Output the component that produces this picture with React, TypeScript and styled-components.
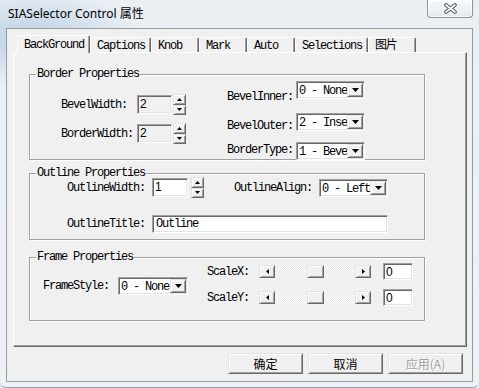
import { Fragment } from 'react';
import styled, { createGlobalStyle, css } from 'styled-components';

const mono = `"Liberation Mono", "Noto Sans CJK SC", monospace`;
const cjk = `"Noto Sans CJK SC", "Noto Sans", sans-serif`;

const GlobalStyle = createGlobalStyle`
  * { box-sizing: border-box; }
  html, body { margin: 0; padding: 0; }
  body { width: 479px; height: 388px; overflow: hidden; background: #eef2f6; }
`;

const raised = css`
  background: #f0f0f0;
  border: 1px solid;
  border-color: #e3e3e3 #696969 #696969 #e3e3e3;
  box-shadow: inset 1px 1px 0 #fff, inset -1px -1px 0 #a0a0a0;
`;

const sunken = css`
  border: 1px solid;
  border-color: #a0a0a0 #fff #fff #a0a0a0;
  box-shadow: inset 1px 1px 0 #696969, inset -1px -1px 0 #e3e3e3;
`;

const Window = styled.div`
  width: 479px;
  height: 388px;
  display: flex;
  flex-direction: column;
  background:
    radial-gradient(ellipse 110px 50px at 30px 38px, rgba(184, 204, 226, 0.9), rgba(184, 204, 226, 0)),
    linear-gradient(#eaeff4, #eef2f6);
  border-bottom: 1px solid #9aa3ad;
  border-radius: 0 0 6px 6px;
`;

const TitleBar = styled.div`
  height: 28px;
  display: flex;
  align-items: flex-start;
`;

const Title = styled.div`
  padding: 6px 0 0 8px;
  font-family: "Noto Sans", ${cjk};
  font-size: 12px;
  line-height: 16px;
  color: #000;
`;

const CloseButton = styled.div`
  margin-left: auto;
  margin-right: 6px;
  width: 46px;
  height: 18px;
  display: flex;
  align-items: center;
  justify-content: center;
  border: 1px solid #8c939b;
  border-top: none;
  border-radius: 0 0 4px 4px;
  background: linear-gradient(#f7f9fb, #e4e8ed);
  box-shadow: inset 0 0 0 1px rgba(255, 255, 255, 0.8);
`;

const Client = styled.div`
  margin: 0 6px;
  height: 354px;
  display: flex;
  flex-direction: column;
  padding: 6px 5px 0 6px;
  background: #f0f0f0;
  border: 1px solid #979ca2;
`;

const TabStrip = styled.div`
  position: relative;
  z-index: 1;
  height: 18px;
  display: flex;
  align-items: flex-end;
  padding-left: 4px;
`;

const Tab = styled.div<{ $active?: boolean }>`
  min-width: 48px;
  height: ${p => (p.$active ? 18 : 15)}px;
  margin-bottom: ${p => (p.$active ? 0 : 1)}px;
  padding: ${p => (p.$active ? '0' : '2px')} 5px 0 6px;
  display: flex;
  align-items: center;
  background: #f0f0f0;
  border-top: 1px solid #fff;
  border-left: 1px solid #fff;
  border-right: 1px solid #696969;
  border-radius: 2px 2px 0 0;
  box-shadow: inset -1px 0 0 #a0a0a0;
  font-family: ${mono};
  font-size: 12px;
  letter-spacing: -1.2px;
  line-height: 12px;
  color: #000;
  white-space: nowrap;
`;

const Panel = styled.div`
  margin-top: -1px;
  height: 295px;
  display: flex;
  flex-direction: column;
  padding-left: 15px;
  border: 1px solid;
  border-color: #fff #696969 #696969 #fff;
  box-shadow: inset -1px -1px 0 #a0a0a0;
`;

const Group = styled.div<{ $top: number; $height: number }>`
  position: relative;
  width: 396px;
  height: ${p => p.$height}px;
  margin-top: ${p => p.$top}px;
  border: 1px solid #a0a0a0;
  box-shadow: inset 1px 1px 0 #fff, 1px 1px 0 #fff;
`;

const Caption = styled.span`
  position: absolute;
  top: -7px;
  left: 6px;
  padding: 0 1px;
  background: #f0f0f0;
  font-family: ${mono};
  font-size: 12px;
  letter-spacing: -1.2px;
  line-height: 12px;
  color: #000;
  white-space: nowrap;
`;

const Label = styled.span<{ $w: number; $pad?: number }>`
  flex: none;
  width: ${p => p.$w}px;
  padding-top: ${p => p.$pad ?? 0}px;
  font-family: ${mono};
  font-size: 12px;
  letter-spacing: -1.2px;
  line-height: 12px;
  color: #000;
  white-space: nowrap;
`;

/* ---------- controls ---------- */

const NumBox = styled.div<{ $w: number; $h: number; $white?: boolean }>`
  ${sunken};
  flex: none;
  width: ${p => p.$w}px;
  height: ${p => p.$h}px;
  padding: 1px 0 0 2px;
  background: ${p => (p.$white ? '#fff' : '#f0f0f0')};
  font-family: "Liberation Sans", Arial, sans-serif;
  font-size: 12px;
  line-height: 14px;
  color: #000;
`;

const TextBox = styled.div<{ $w: number }>`
  ${sunken};
  flex: none;
  width: ${p => p.$w}px;
  height: 18px;
  padding: 2px 0 0 3px;
  background: #fff;
  font-family: ${mono};
  font-size: 12px;
  letter-spacing: -1.2px;
  line-height: 12px;
  color: #000;
`;

const SpinWrap = styled.div<{ $gap: number }>`
  flex: none;
  width: 13px;
  height: 21px;
  margin-left: ${p => p.$gap}px;
  display: flex;
  flex-direction: column;
`;

const SpinBtn = styled.div`
  ${raised};
  flex: 1;
  display: flex;
  align-items: center;
  justify-content: center;
`;

const UpArrow = () => (
  <svg width="5" height="3" viewBox="0 0 5 3">
    <polygon points="0,3 5,3 2.5,0" fill="#000" />
  </svg>
);

const DownArrow = ({ w = 5, h = 3 }: { w?: number; h?: number }) => (
  <svg width={w} height={h} viewBox={`0 0 ${w} ${h}`}>
    <polygon points={`0,0 ${w},0 ${w / 2},${h}`} fill="#000" />
  </svg>
);

const Spinner = ({ gap }: { gap: number }) => (
  <SpinWrap $gap={gap}>
    <SpinBtn>
      <UpArrow />
    </SpinBtn>
    <SpinBtn>
      <DownArrow />
    </SpinBtn>
  </SpinWrap>
);

const ComboBox = styled.div<{ $w: number }>`
  ${sunken};
  flex: none;
  width: ${p => p.$w}px;
  height: 18px;
  padding: 2px;
  display: flex;
  background: #fff;
`;

const ComboText = styled.span`
  flex: 1;
  padding-top: 1px;
  font-family: ${mono};
  font-size: 12px;
  letter-spacing: -1.2px;
  line-height: 12px;
  color: #000;
  white-space: nowrap;
`;

const DropBtn = styled.div`
  ${raised};
  flex: none;
  width: 16px;
  margin: -1px -1px -1px 0;
  display: flex;
  align-items: center;
  justify-content: center;
`;

const Combo = ({ w, value }: { w: number; value: string }) => (
  <ComboBox $w={w}>
    <ComboText>{value}</ComboText>
    <DropBtn>
      <DownArrow w={7} h={4} />
    </DropBtn>
  </ComboBox>
);

const ScrollBar = styled.div`
  flex: none;
  width: 112px;
  height: 13px;
  display: flex;
`;

const ScrollBtn = styled.div`
  ${raised};
  flex: none;
  width: 16px;
  display: flex;
  align-items: center;
  justify-content: center;
`;

const Track = styled.div`
  flex: 1;
  display: flex;
  justify-content: center;
  background: repeating-conic-gradient(#fbfbfb 0 25%, #e9e9e9 0 50%) 0 0 / 2px 2px;
`;

const Thumb = styled.div`
  ${raised};
  width: 17px;
`;

const Slider = () => (
  <ScrollBar>
    <ScrollBtn>
      <svg width="3" height="5" viewBox="0 0 3 5">
        <polygon points="3,0 3,5 0,2.5" fill="#000" />
      </svg>
    </ScrollBtn>
    <Track>
      <Thumb />
    </Track>
    <ScrollBtn>
      <svg width="3" height="5" viewBox="0 0 3 5">
        <polygon points="0,0 0,5 3,2.5" fill="#000" />
      </svg>
    </ScrollBtn>
  </ScrollBar>
);

/* ---------- group layouts ---------- */

const Row = styled.div<{ $h: number; $top?: number; $left?: number }>`
  display: flex;
  align-items: center;
  height: ${p => p.$h}px;
  margin-top: ${p => p.$top ?? 0}px;
  padding-left: ${p => p.$left ?? 0}px;
`;

const BorderBody = styled.div`
  display: flex;
  align-items: flex-start;
  padding-left: 31px;
`;

const SpinColumn = styled.div`
  width: 166px;
  margin-top: 20px;
  display: flex;
  flex-direction: column;
  gap: 10px;
`;

const ComboGrid = styled.div`
  margin-top: 6px;
  display: grid;
  grid-template-columns: 69px 69px;
  row-gap: 10px;
  align-items: start;
`;

const Spacer = styled.div<{ $w: number }>`
  flex: none;
  width: ${p => p.$w}px;
`;

const FrameBody = styled.div`
  display: flex;
  align-items: flex-start;
  padding-left: 13px;
`;

const ScaleColumn = styled.div`
  margin: 5px 0 0 19px;
  display: flex;
  flex-direction: column;
  gap: 9px;
`;

const ButtonBar = styled.div`
  margin-top: 6px;
  padding-right: 4px;
  display: flex;
  justify-content: flex-end;
  gap: 5px;
`;

const DialogButton = styled.div<{ $disabled?: boolean }>`
  ${raised};
  width: 75px;
  height: 21px;
  display: flex;
  align-items: center;
  justify-content: center;
  font-family: ${cjk};
  font-size: 12px;
  color: ${p => (p.$disabled ? '#a0a0a0' : '#000')};
  text-shadow: ${p => (p.$disabled ? '1px 1px 0 #fff' : 'none')};
`;

const tabs = ['BackGround', 'Captions', 'Knob', 'Mark', 'Auto', 'Selections', '图片'];

// combo text shown as it appears in the narrow boxes
const bevelCombos = [
  { label: 'BevelInner:', value: '0 - None', pad: 10 },
  { label: 'BevelOuter:', value: '2 - Inse', pad: 7 },
  { label: 'BorderType:', value: '1 - Beve', pad: 2 },
];

export default function App() {
  return (
    <>
      <GlobalStyle />
      <Window>
        <TitleBar>
          <Title>SIASelector Control 属性</Title>
          <CloseButton>
            <svg width="13" height="11" viewBox="0 0 13 11">
              <path d="M2 2 L11 9 M11 2 L2 9" stroke="#4f5864" strokeWidth="3.6" strokeLinecap="round" />
              <path d="M2 2 L11 9 M11 2 L2 9" stroke="#fff" strokeWidth="1.6" strokeLinecap="round" />
            </svg>
          </CloseButton>
        </TitleBar>
        <Client>
          <TabStrip>
            {tabs.map((t, i) => (
              <Tab key={t} $active={i === 0}>
                {t}
              </Tab>
            ))}
          </TabStrip>
          <Panel>
            <Group $top={21} $height={86}>
              <Caption>Border Properties</Caption>
              <BorderBody>
                <SpinColumn>
                  <Row $h={19}>
                    <Label $w={76}>BevelWidth:</Label>
                    <NumBox $w={35} $h={19}>2</NumBox>
                    <Spinner gap={1} />
                  </Row>
                  <Row $h={19}>
                    <Label $w={76}>BorderWidth:</Label>
                    <NumBox $w={35} $h={19}>2</NumBox>
                    <Spinner gap={1} />
                  </Row>
                </SpinColumn>
                <ComboGrid>
                  {bevelCombos.map(c => (
                    <Fragment key={c.label}>
                      <Label $w={69} $pad={c.pad}>
                        {c.label}
                      </Label>
                      <Combo w={69} value={c.value} />
                    </Fragment>
                  ))}
                </ComboGrid>
              </BorderBody>
            </Group>

            <Group $top={13} $height={67}>
              <Caption>Outline Properties</Caption>
              <Row $h={19} $top={4} $left={37}>
                <Label $w={85}>OutlineWidth:</Label>
                <NumBox $w={36} $h={19} $white>
                  1
                </NumBox>
                <Spinner gap={3} />
                <Spacer $w={30} />
                <Label $w={85}>OutlineAlign:</Label>
                <Combo w={69} value="0 - Left" />
              </Row>
              <Row $h={18} $top={18} $left={37}>
                <Label $w={85}>OutlineTitle:</Label>
                <TextBox $w={236}>Outline</TextBox>
              </Row>
            </Group>

            <Group $top={17} $height={64}>
              <Caption>Frame Properties</Caption>
              <FrameBody>
                <Row $h={18} $top={19}>
                  <Label $w={75}>FrameStyle:</Label>
                  <Combo w={70} value="0 - None" />
                </Row>
                <ScaleColumn>
                  {['ScaleX:', 'ScaleY:'].map(s => (
                    <Row key={s} $h={17}>
                      <Label $w={52}>{s}</Label>
                      <Slider />
                      <Spacer $w={12} />
                      <NumBox $w={30} $h={17} $white>
                        0
                      </NumBox>
                    </Row>
                  ))}
                </ScaleColumn>
              </FrameBody>
            </Group>
          </Panel>
          <ButtonBar>
            <DialogButton>确定</DialogButton>
            <DialogButton>取消</DialogButton>
            <DialogButton $disabled>应用(A)</DialogButton>
          </ButtonBar>
        </Client>
      </Window>
    </>
  );
}
